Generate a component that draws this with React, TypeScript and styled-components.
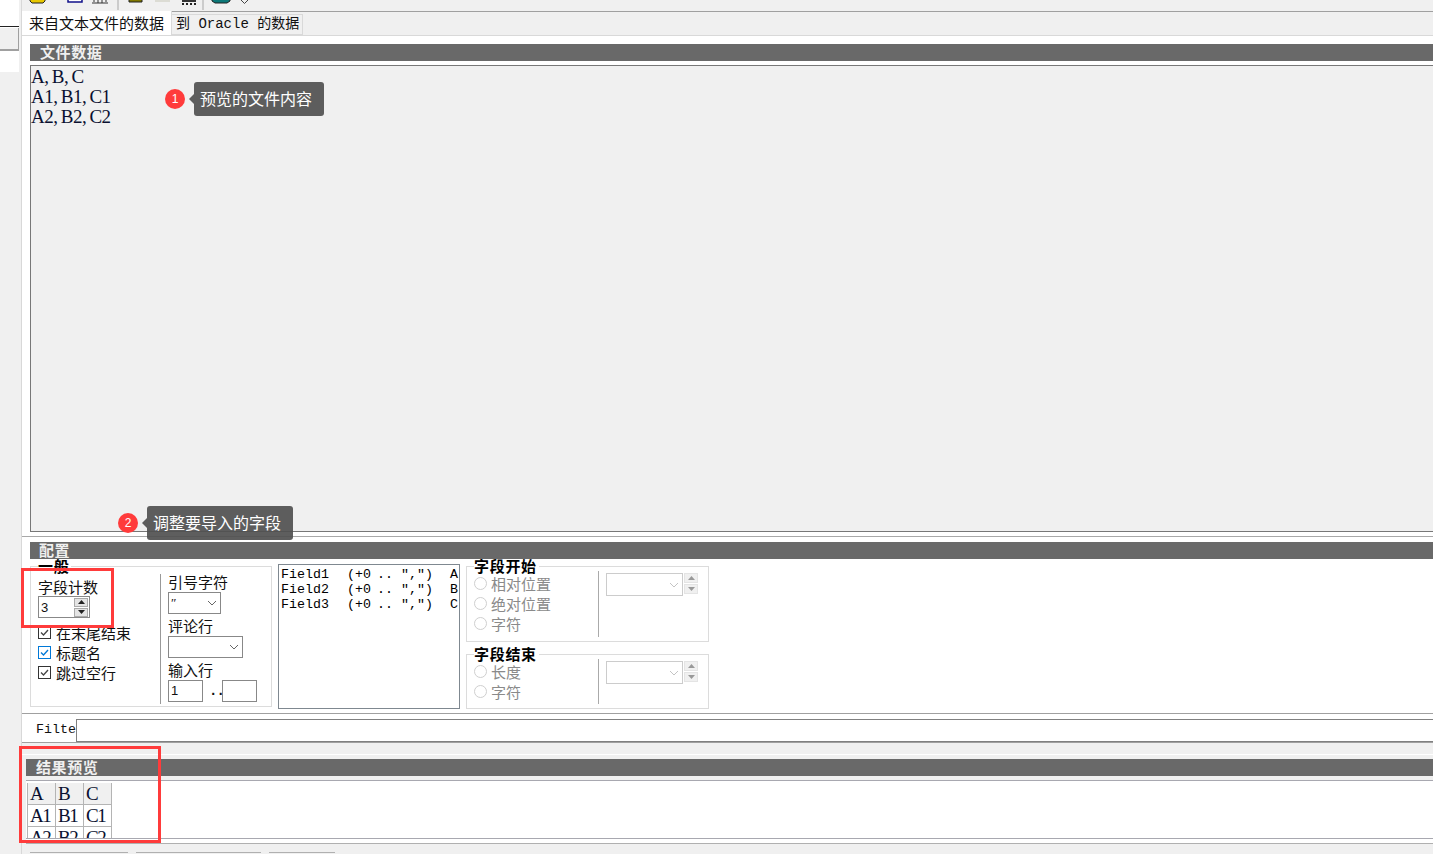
import React from 'react';
import styled, { createGlobalStyle } from 'styled-components';

const GlobalStyle = createGlobalStyle`
    html, body {
        margin: 0;
        height: 100%;
        overflow: hidden;
        background: #f0f0f0;
    }
    * {
        box-sizing: border-box;
    }
`;

const cjk = `"Noto Sans CJK SC", "Liberation Sans", sans-serif`;
const mono = `"Liberation Mono", "Noto Sans CJK SC", monospace`;
const serif = `"Liberation Serif", "Noto Sans CJK SC", serif`;

const Shell = styled.div`
    position: relative;
    display: flex;
    width: 1433px;
    height: 854px;
    overflow: hidden;
    font-family: ${cjk};
    font-size: 15px;
    color: #111;
`;

const Side = styled.aside`
    width: 22px;
    flex: none;
    background: #f0f0f0;
    border-right: 1px solid #d8d8d8;
`;

const SideTree = styled.div`
    width: 19px;
    height: 72px;
    padding-top: 26px;
    background: #fff;
    i {
        display: block;
        height: 1px;
        background: #222;
    }
    b {
        display: block;
        height: 23px;
        margin-top: 1px;
        background: #f0f0f0;
        border-right: 1px solid #a0a0a0;
        border-bottom: 2px solid #a0a0a0;
    }
`;

const Main = styled.main`
    flex: 1;
    min-width: 0;
    display: flex;
    flex-direction: column;
`;

const Toolbar = styled.div`
    height: 12px;
    flex: none;
    overflow: hidden;
    border-bottom: 1px solid #a0a0a0;
    svg {
        display: block;
    }
`;

const Tabs = styled.div`
    height: 24px;
    flex: none;
    display: flex;
    align-items: flex-end;
    border-bottom: 1px solid #d9d9d9;
`;

const ActiveTab = styled.div`
    width: 150px;
    height: 24px;
    padding-left: 7px;
    background: #fff;
    border-right: 1px solid #d9d9d9;
    line-height: 23px;
    white-space: nowrap;
`;

const Tab = styled.div`
    width: 131px;
    height: 21px;
    padding-left: 4px;
    border: 1px solid #d9d9d9;
    border-left: 0;
    line-height: 19px;
    white-space: pre;
    font-size: 14px;
    font-family: ${mono};
`;

const FilePanel = styled.section`
    height: 500px;
    flex: none;
    padding: 8px 0 0 8px;
    background: #fff;
`;

const SectionBar = styled.div<{ $indent: number }>`
    position: relative;
    z-index: 1;
    height: 17px;
    padding-left: ${(p) => p.$indent}px;
    background: #696969;
    color: #f0f0f0;
    font-size: 15px;
    font-weight: 700;
    line-height: 16px;
    letter-spacing: 0.6px;
`;

const Preview = styled.div`
    height: 467px;
    margin-top: 4px;
    padding: 1px 0 0 0;
    background: #f0f0f0;
    border: 1px solid #777;
    border-right: 0;
    font-family: ${serif};
    font-size: 19px;
    line-height: 20px;
    letter-spacing: -0.5px;
    word-spacing: -1px;
    white-space: pre;
    color: #0a1030;
`;

const ConfigPanel = styled.section`
    height: 178px;
    flex: none;
    padding: 5px 0 0 8px;
    background: #fff;
    border-top: 1px solid #a8a8a8;
    border-bottom: 1px solid #a0a0a0;
`;

const ConfigRow = styled.div`
    display: flex;
    align-items: flex-start;
    gap: 6px;
    margin-top: 7px;
`;

const Group = styled.div<{ $w: number; $h: number }>`
    position: relative;
    width: ${(p) => p.$w}px;
    height: ${(p) => p.$h}px;
    flex: none;
    background: #fff;
    border: 1px solid #dcdcdc;
`;

const Legend = styled.span`
    position: absolute;
    left: 7px;
    top: -11px;
    padding-right: 2px;
    background: #fff;
    font-size: 15px;
    font-weight: 700;
    line-height: 20px;
    letter-spacing: 0.7px;
    color: #000;
`;

const GeneralBody = styled.div`
    display: flex;
    height: 100%;
    padding: 7px 0 2px 7px;
`;

const GeneralLeft = styled.div`
    width: 122px;
    padding-top: 4px;
`;

const GeneralRight = styled.div`
    flex: 1;
    padding: 0 0 0 7px;
    border-left: 1px solid #999;
`;

const FieldLabel = styled.div<{ $mt?: number }>`
    margin-top: ${(p) => p.$mt ?? 0}px;
    margin-bottom: 1px;
    font-size: 15px;
    line-height: 18px;
    height: 18px;
    white-space: nowrap;
`;

const Spin = styled.div`
    display: flex;
    justify-content: space-between;
    align-items: center;
    width: 52px;
    height: 22px;
    margin-top: -1px;
    padding: 0 0 0 2px;
    border: 1px solid #888;
    font-family: "Liberation Sans", sans-serif;
    font-size: 13px;
`;

const Arrows = styled.div<{ $off?: boolean }>`
    display: flex;
    flex-direction: column;
    gap: 1px;
    width: 14px;
    margin-right: ${(p) => (p.$off ? 0 : 1)}px;
    flex: none;
    span {
        display: flex;
        align-items: center;
        justify-content: center;
        height: ${(p) => (p.$off ? 10 : 9)}px;
        background: ${(p) => (p.$off ? '#f0f0f0' : '#e4e4e4')};
        border: 1px solid ${(p) => (p.$off ? '#e4e4e4' : '#aaa')};
    }
    svg {
        display: block;
    }
`;

const Checks = styled.div`
    display: flex;
    flex-direction: column;
    gap: 7px;
    margin-top: 8px;
`;

const CheckRow = styled.div`
    display: flex;
    align-items: center;
    gap: 5px;
    height: 13px;
    white-space: nowrap;
`;

const Box = styled.span<{ $focus?: boolean }>`
    width: 13px;
    height: 13px;
    flex: none;
    display: flex;
    align-items: center;
    justify-content: center;
    border: 1px solid ${(p) => (p.$focus ? '#0078d7' : '#333')};
`;

const Combo = styled.div<{ $w: number; $h: number; $off?: boolean }>`
    display: flex;
    align-items: center;
    justify-content: space-between;
    width: ${(p) => p.$w}px;
    height: ${(p) => p.$h}px;
    padding: 0 3px 0 2px;
    background: #fff;
    border: 1px solid ${(p) => (p.$off ? '#ccc' : '#888')};
    font-family: ${serif};
    font-size: 13px;
    line-height: 14px;
    svg {
        display: block;
        flex: none;
    }
`;

const LinesRow = styled.div`
    display: flex;
    align-items: center;
`;

const SmallInput = styled.div`
    width: 35px;
    height: 22px;
    padding-left: 2px;
    border: 1px solid #888;
    font-family: "Liberation Sans", sans-serif;
    font-size: 13px;
    line-height: 20px;
`;

const Dots = styled.span`
    width: 19px;
    padding-left: 6px;
    font-family: ${mono};
    font-size: 14px;
    font-weight: 700;
    letter-spacing: -1px;
`;

const FieldList = styled.div`
    width: 182px;
    height: 145px;
    flex: none;
    margin-top: -2px;
    padding: 2px 0 0 2px;
    background: #fff;
    border: 1px solid #7f8890;
    overflow: hidden;
`;

const FieldLine = styled.div`
    display: grid;
    grid-template-columns: 66px 30px 24px 49px auto;
    font-family: ${mono};
    font-size: 13.3px;
    line-height: 15px;
    white-space: pre;
    color: #000;
`;

const GroupStack = styled.div`
    display: flex;
    flex-direction: column;
    gap: 12px;
`;

const RangeBody = styled.div`
    display: flex;
    height: 100%;
    padding: 4px 0 4px 7px;
`;

const Radios = styled.div`
    width: 124px;
    padding-top: 6px;
    display: flex;
    flex-direction: column;
    gap: 7px;
`;

const RadioRow = styled.div`
    display: flex;
    align-items: center;
    gap: 4px;
    height: 13px;
    color: #8a8a8a;
    white-space: nowrap;
    i {
        width: 13px;
        height: 13px;
        flex: none;
        background: #fff;
        border: 1px solid #cfcfcf;
        border-radius: 50%;
    }
`;

const RangeRight = styled.div`
    flex: 1;
    display: flex;
    align-items: flex-start;
    gap: 1px;
    padding: 2px 0 0 7px;
    border-left: 1px solid #aaa;
`;

const FilterRow = styled.div`
    height: 29px;
    flex: none;
    display: flex;
    align-items: flex-start;
    padding: 5px 0 0 14px;
    background: #fff;
    border-bottom: 1px solid #a0a0a0;
`;

const FilterLabel = styled.span`
    width: 40px;
    flex: none;
    font-family: ${mono};
    font-size: 13.3px;
    line-height: 22px;
    white-space: pre;
`;

const FilterInput = styled.div`
    flex: 1;
    height: 23px;
    border: 1px solid #808080;
    border-right: 0;
    background: #fff;
`;

const ResultPanel = styled.section`
    flex: 1;
    min-height: 0;
    padding: 16px 0 0 4px;
`;

const ResultLip = styled.div`
    height: 1px;
    margin: -5px 0 4px -4px;
    background: #fff;
`;

const ResultBox = styled.div`
    height: 59px;
    margin-top: 4px;
    padding: 2px 0 0 1px;
    background: #fff;
    border-top: 1px solid #a8a8b0;
    border-bottom: 1px solid #a8a8b0;
    overflow: hidden;
`;

const FootRule = styled.div`
    height: 5px;
    background: #fff;
    border-bottom: 1px solid #b0b0b0;
`;

const Sheet = styled.div`
    display: grid;
    grid-template-columns: repeat(3, 28px);
    grid-auto-rows: 22px;
    width: 85px;
    border-left: 1px solid #b4b4b4;
`;

const Cell = styled.div<{ $head?: boolean }>`
    padding-left: 2px;
    background: ${(p) => (p.$head ? '#f0f0f0' : '#fff')};
    border-right: 1px solid #b4b4b4;
    border-bottom: 1px solid #b4b4b4;
    font-family: ${serif};
    font-size: 19px;
    line-height: 22px;
    letter-spacing: -1.5px;
    color: #0a1030;
`;

const Buttons = styled.div`
    display: flex;
    gap: 8px;
    margin: 8px 0 0 4px;
`;

const FootButton = styled.span<{ $w: number }>`
    width: ${(p) => p.$w}px;
    height: 4px;
    background: #f0f0f0;
    border-top: 1px solid #b0b0b0;
`;

const Badge = styled.span<{ $x: number; $y: number }>`
    position: absolute;
    z-index: 2;
    left: ${(p) => p.$x}px;
    top: ${(p) => p.$y}px;
    width: 20px;
    height: 20px;
    background: #ff3b3b;
    border-radius: 50%;
    color: #fff;
    font-family: "Liberation Sans", sans-serif;
    font-size: 12px;
    line-height: 20px;
    text-align: center;
`;

const Tip = styled.div<{ $x: number; $y: number; $w: number; $h: number }>`
    position: absolute;
    z-index: 2;
    left: ${(p) => p.$x}px;
    top: ${(p) => p.$y}px;
    width: ${(p) => p.$w}px;
    height: ${(p) => p.$h}px;
    padding-left: 6px;
    background: rgba(80, 80, 80, 0.92);
    border-radius: 3px;
    color: #fff;
    font-size: 16px;
    line-height: ${(p) => p.$h - 2}px;
    white-space: nowrap;
    &::before {
        content: '';
        position: absolute;
        left: -5px;
        top: 50%;
        margin-top: -5px;
        border: 5px solid transparent;
        border-left: 0;
        border-right-color: rgba(80, 80, 80, 0.92);
    }
`;

const Mark = styled.div<{ $x: number; $y: number; $w: number; $h: number }>`
    position: absolute;
    z-index: 2;
    left: ${(p) => p.$x}px;
    top: ${(p) => p.$y}px;
    width: ${(p) => p.$w}px;
    height: ${(p) => p.$h}px;
    border: 3px solid #ff3b3b;
    pointer-events: none;
`;

const Chevron = ({ color }: { color: string }) => (
    <svg width="10" height="6" viewBox="0 0 10 6">
        <path d="M1 1l4 4 4-4" fill="none" stroke={color} strokeWidth="1" />
    </svg>
);

const Tick = ({ color }: { color: string }) => (
    <svg width="11" height="11" viewBox="0 0 11 11">
        <path d="M2 5.5l2.5 2.5L9 3" fill="none" stroke={color} strokeWidth="1.3" />
    </svg>
);

const Triangle = ({ up, color }: { up?: boolean; color: string }) => (
    <svg width="7" height="4" viewBox="0 0 7 4">
        <path d={up ? 'M3.5 0L7 4H0z' : 'M0 0h7L3.5 4z'} fill={color} />
    </svg>
);

const SpinArrows = ({ off }: { off?: boolean }) => {
    const color = off ? '#999' : '#222';
    return (
        <Arrows $off={off}>
            <span><Triangle up color={color} /></span>
            <span><Triangle color={color} /></span>
        </Arrows>
    );
};

// only the lower edge of each toolbar icon shows, the rest is cut off
const ToolbarIcons = () => (
    <svg width="240" height="11" viewBox="0 1 240 11">
        <path d="M8 0h15v2l-2 2H10L8 2z" fill="#e8c800" stroke="#222" strokeWidth="1" />
        <path d="M46 0v3h14V0" fill="#fff" stroke="#10108a" strokeWidth="1.5" />
        <path d="M72 0v3M76 0v4M80 0v4M84 0v3M70 4h16" fill="none" stroke="#333" strokeWidth="1" />
        <path d="M96 0v11" stroke="#a8a8a8" strokeWidth="1" />
        <path d="M107 0h13v3h-13z" fill="#807800" stroke="#222" strokeWidth="1" />
        <path d="M133 0h15v3h-15z" fill="#dcdcd4" />
        <path d="M160 0h14v3h-14z" fill="#333" />
        <path d="M160 4h2v2h-2zM164 4h2v2h-2zM168 4h2v2h-2zM172 4h2v2h-2z" fill="#222" />
        <path d="M181 0v11" stroke="#a8a8a8" strokeWidth="1" />
        <path d="M190 0h18v2l-3 2h-12l-3-2z" fill="#0d7878" stroke="#222" strokeWidth="1" />
        <path d="M219 1l3.5 3.5L226 1" fill="none" stroke="#444" strokeWidth="1" />
    </svg>
);

const fields = ['Field1', 'Field2', 'Field3'];
const letters = ['A', 'B', 'C'];

const App: React.FC = () => {
    return (
        <Shell>
            <GlobalStyle />
            <Side>
                <SideTree><i /><b /></SideTree>
            </Side>
            <Main>
                <Toolbar><ToolbarIcons /></Toolbar>
                <Tabs>
                    <ActiveTab>来自文本文件的数据</ActiveTab>
                    <Tab>到 Oracle 的数据</Tab>
                </Tabs>
                <FilePanel>
                    <SectionBar $indent={10}>文件数据</SectionBar>
                    <Preview>{'A, B, C\nA1, B1, C1\nA2, B2, C2'}</Preview>
                </FilePanel>
                <ConfigPanel>
                    <SectionBar $indent={9}>配置</SectionBar>
                    <ConfigRow>
                        <Group $w={242} $h={141}>
                            <Legend>一般</Legend>
                            <GeneralBody>
                                <GeneralLeft>
                                    <FieldLabel>字段计数</FieldLabel>
                                    <Spin>3<SpinArrows /></Spin>
                                    <Checks>
                                        <CheckRow><Box><Tick color="#444" /></Box>在末尾结束</CheckRow>
                                        <CheckRow><Box $focus><Tick color="#0078d7" /></Box>标题名</CheckRow>
                                        <CheckRow><Box><Tick color="#444" /></Box>跳过空行</CheckRow>
                                    </Checks>
                                </GeneralLeft>
                                <GeneralRight>
                                    <FieldLabel $mt={-1}>引号字符</FieldLabel>
                                    <Combo $w={53} $h={22}>″<Chevron color="#666" /></Combo>
                                    <FieldLabel $mt={3}>评论行</FieldLabel>
                                    <Combo $w={75} $h={22}><span /><Chevron color="#666" /></Combo>
                                    <FieldLabel $mt={3}>输入行</FieldLabel>
                                    <LinesRow>
                                        <SmallInput>1</SmallInput>
                                        <Dots>..</Dots>
                                        <SmallInput />
                                    </LinesRow>
                                </GeneralRight>
                            </GeneralBody>
                        </Group>
                        <FieldList>
                            {fields.map((name, i) => (
                                <FieldLine key={name}>
                                    <span>{name}</span>
                                    <span>(+0</span>
                                    <span>..</span>
                                    <span>″,″)</span>
                                    <span>{letters[i]}</span>
                                </FieldLine>
                            ))}
                        </FieldList>
                        <GroupStack>
                            <Group $w={243} $h={76}>
                                <Legend>字段开始</Legend>
                                <RangeBody>
                                    <Radios>
                                        <RadioRow><i />相对位置</RadioRow>
                                        <RadioRow><i />绝对位置</RadioRow>
                                        <RadioRow><i />字符</RadioRow>
                                    </Radios>
                                    <RangeRight>
                                        <Combo $w={77} $h={23} $off><span /><Chevron color="#c4c4c4" /></Combo>
                                        <SpinArrows off />
                                    </RangeRight>
                                </RangeBody>
                            </Group>
                            <Group $w={243} $h={55}>
                                <Legend>字段结束</Legend>
                                <RangeBody>
                                    <Radios>
                                        <RadioRow><i />长度</RadioRow>
                                        <RadioRow><i />字符</RadioRow>
                                    </Radios>
                                    <RangeRight>
                                        <Combo $w={77} $h={23} $off><span /><Chevron color="#c4c4c4" /></Combo>
                                        <SpinArrows off />
                                    </RangeRight>
                                </RangeBody>
                            </Group>
                        </GroupStack>
                    </ConfigRow>
                </ConfigPanel>
                <FilterRow>
                    <FilterLabel>Filte</FilterLabel>
                    <FilterInput />
                </FilterRow>
                <ResultPanel>
                    <ResultLip />
                    <SectionBar $indent={10}>结果预览</SectionBar>
                    <ResultBox>
                        <Sheet>
                            {['A', 'B', 'C'].map((c) => <Cell key={c} $head>{c}</Cell>)}
                            {['A1', 'B1', 'C1', 'A2', 'B2', 'C2'].map((c) => <Cell key={c}>{c}</Cell>)}
                        </Sheet>
                    </ResultBox>
                    <FootRule />
                    <Buttons>
                        <FootButton $w={98} />
                        <FootButton $w={125} />
                        <FootButton $w={66} />
                    </Buttons>
                </ResultPanel>
            </Main>

            <Badge $x={165} $y={89}>1</Badge>
            <Tip $x={194} $y={82} $w={130} $h={34}>预览的文件内容</Tip>
            <Badge $x={118} $y={513}>2</Badge>
            <Tip $x={147} $y={506} $w={146} $h={34}>调整要导入的字段</Tip>
            <Mark $x={21} $y={568} $w={93} $h={60} />
            <Mark $x={19} $y={746} $w={142} $h={97} />
        </Shell>
    );
};

export default App;
